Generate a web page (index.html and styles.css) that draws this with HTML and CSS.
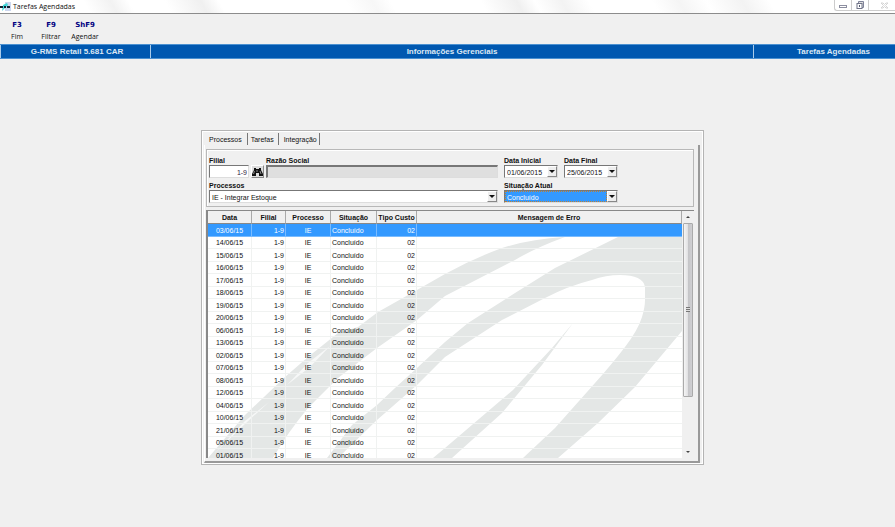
FILE: index.html
```html
<!DOCTYPE html>
<html lang="pt-BR">
<head>
<meta charset="utf-8">
<title>Tarefas Agendadas</title>
<link rel="stylesheet" href="styles.css">
</head>
<body>
<header class="titlebar">
  <svg class="logo" width="11" height="11" viewBox="0 0 11 11">
    <rect x="5" y="1" width="6" height="9" fill="#cbd6ee"/>
    <path d="M3 4l4-2 1 2-3 3-3 3z" fill="#3fd6d8"/>
    <path d="M0 5h3v2H0zM4 5h2v2H4zM7 5h3v2H7z" fill="#123"/>
  </svg>
  <h1>Tarefas Agendadas</h1>
  <div class="window-buttons">
    <button type="button" aria-label="Minimizar"><svg width="9" height="9" viewBox="0 0 9 9"><rect x=".5" y="4.500" width="7" height="2" fill="#fff" stroke="#8c8ea0"/></svg></button>
    <button type="button" aria-label="Restaurar"><svg width="9" height="9" viewBox="0 0 9 9"><path d="M2.500 2.500v-2h5v6h-2" fill="#ddd" stroke="#80849a"/><rect x="1" y="2.500" width="5" height="5" fill="#fff" stroke="#707488"/><rect x="3" y="4" width="1" height="2" fill="#555a70"/></svg></button>
    <button type="button" aria-label="Fechar" class="close"><svg width="9" height="9" viewBox="0 0 9 9"><path d="M1 2h2l1.500 1.500L6 2h2L5.500 4.500 8 7H6L4.500 5.500 3 7H1l2.500-2.500z" fill="#fff" stroke="#d4d4d4"/></svg></button>
  </div>
</header>

<nav class="toolbar">
  <button type="button"><b>F3</b>Fim</button>
  <button type="button"><b>F9</b>Filtrar</button>
  <button type="button"><b>ShF9</b>Agendar</button>
</nav>

<div class="banner">
  <span class="system">G-RMS Retail 5.681 CAR</span>
  <span class="module">Informações Gerenciais</span>
  <span class="screen">Tarefas Agendadas</span>
</div>

<main class="panel">
  <div class="tabs" role="tablist">
    <button type="button" role="tab" aria-selected="true">Processos</button>
    <button type="button" role="tab">Tarefas</button>
    <button type="button" role="tab">Integração</button>
  </div>

  <div class="page">
    <form class="filter">
      <div class="group main">
        <div class="field branch">
          <label for="filial">Filial</label>
          <input id="filial" type="text" value="1-9">
        </div>
        <button type="button" class="search" aria-label="Pesquisar">
          <svg width="11" height="10" viewBox="0 0 11 10"><path d="M2 1h2v1h3V1h2v2l2 4v2H7V6H4v3H0V7l2-4z" fill="#111"/><path d="M2.500 4L1.500 7M8 4l1 3M5 3v2" stroke="#bbb" stroke-width=".7"/></svg>
        </button>
        <div class="field company">
          <label for="razao">Razão Social</label>
          <input id="razao" type="text" readonly>
        </div>
      </div>
      <div class="group dates">
        <div class="field">
          <label for="inicial">Data Inicial</label>
          <div class="combo"><select id="inicial"><option>01/06/2015</option></select><i class="arrow"></i></div>
        </div>
        <div class="field">
          <label for="final">Data Final</label>
          <div class="combo"><select id="final"><option>25/06/2015</option></select><i class="arrow"></i></div>
        </div>
      </div>
      <div class="field">
        <label for="processos">Processos</label>
        <div class="combo"><select id="processos"><option>IE - Integrar Estoque</option></select><i class="arrow"></i></div>
      </div>
      <div class="field">
        <label for="situacao">Situação Atual</label>
        <div class="combo active"><select id="situacao"><option>Concluído</option></select><i class="arrow"></i></div>
      </div>
    </form>

    <div class="grid">
      <div class="view">
        <svg class="watermark" viewBox="208 237 474 221" preserveAspectRatio="none">
          <path d="M565 237Q530 239 502 248Q472 259 445 274L417 290L378 312L358 327L338 333L308 357L285 377L245 415L208 458H273Q288 432 308 408L338 378L377 348L417 320L445 296L515 260Q535 248 565 237z"/>
          <path fill-rule="evenodd" d="M327 458L352 425L377 405L395 388L417 368L445 342L468 323L515 293L555 268L618 237H682V331L635 387L598 423L558 458H523L555 428L595 383Q612 364 625 347Q638 330 642 317Q645 307 645 300V287Q643 275 620 275Q606 275 592 280Q568 286 545 298L502 320L445 357L417 385L377 420L338 458z"/>
          <path d="M573 323L552 348L513 390L445 448L433 458H452L502 413L542 365z"/>
          <path class="slit" d="M330 346L308 363L287 385L310 367zM269 402L245 421L215 453L246 423z"/>
        </svg>
        <table>
          <colgroup>
            <col class="date">
            <col class="branch">
            <col class="process">
            <col class="status">
            <col class="cost">
            <col class="message">
          </colgroup>
          <thead>
            <tr><th>Data</th><th>Filial</th><th>Processo</th><th>Situação</th><th>Tipo Custo</th><th>Mensagem de Erro</th></tr>
          </thead>
          <tbody>
            <tr class="selected"><td>03/06/15</td><td>1-9</td><td>IE</td><td>Concluído</td><td>02</td><td></td></tr>
            <tr><td>14/06/15</td><td>1-9</td><td>IE</td><td>Concluído</td><td>02</td><td></td></tr>
            <tr><td>15/06/15</td><td>1-9</td><td>IE</td><td>Concluído</td><td>02</td><td></td></tr>
            <tr><td>16/06/15</td><td>1-9</td><td>IE</td><td>Concluído</td><td>02</td><td></td></tr>
            <tr><td>17/06/15</td><td>1-9</td><td>IE</td><td>Concluído</td><td>02</td><td></td></tr>
            <tr><td>18/06/15</td><td>1-9</td><td>IE</td><td>Concluído</td><td>02</td><td></td></tr>
            <tr><td>19/06/15</td><td>1-9</td><td>IE</td><td>Concluído</td><td>02</td><td></td></tr>
            <tr><td>20/06/15</td><td>1-9</td><td>IE</td><td>Concluído</td><td>02</td><td></td></tr>
            <tr><td>06/06/15</td><td>1-9</td><td>IE</td><td>Concluído</td><td>02</td><td></td></tr>
            <tr><td>13/06/15</td><td>1-9</td><td>IE</td><td>Concluído</td><td>02</td><td></td></tr>
            <tr><td>02/06/15</td><td>1-9</td><td>IE</td><td>Concluído</td><td>02</td><td></td></tr>
            <tr><td>07/06/15</td><td>1-9</td><td>IE</td><td>Concluído</td><td>02</td><td></td></tr>
            <tr><td>08/06/15</td><td>1-9</td><td>IE</td><td>Concluído</td><td>02</td><td></td></tr>
            <tr><td>12/06/15</td><td>1-9</td><td>IE</td><td>Concluído</td><td>02</td><td></td></tr>
            <tr><td>04/06/15</td><td>1-9</td><td>IE</td><td>Concluído</td><td>02</td><td></td></tr>
            <tr><td>10/06/15</td><td>1-9</td><td>IE</td><td>Concluído</td><td>02</td><td></td></tr>
            <tr><td>21/06/15</td><td>1-9</td><td>IE</td><td>Concluído</td><td>02</td><td></td></tr>
            <tr><td>05/06/15</td><td>1-9</td><td>IE</td><td>Concluído</td><td>02</td><td></td></tr>
            <tr><td>01/06/15</td><td>1-9</td><td>IE</td><td>Concluído</td><td>02</td><td></td></tr>
          </tbody>
        </table>
      </div>
      <div class="scrollbar">
        <i class="up"></i>
        <div class="track"><div class="thumb"><i class="grip"></i></div></div>
        <i class="down"></i>
      </div>
    </div>
  </div>
</main>
</body>
</html>
```

FILE: styles.css
```css
* { box-sizing: border-box; }
body { margin: 0; background: #f0f0f0; color: #111; font: 7px/9px "Liberation Sans", Arial, sans-serif; }
button,
input,
select { margin: 0; padding: 0; border: 0; border-radius: 0; background: none; color: inherit; font: inherit; appearance: none; }

.titlebar { display: flex; height: 14px; border-bottom: 1px solid #8c8c8c; background: linear-gradient(60deg, #fff 10%, #f2f2f2 13%, #fff 15%, #fff 19%, #f0f0f0 23%, #fff 25%, #fff 39%, #f7f7f7 42%, #fff 44%, #fff 54%, #f0f0f0 58%, #fff 60%, #f3f3f3 63%, #fff 66%, #fff 73%, #f5f5f5 76%, #fff 79%, #f3f3f3 83%, #fff 86%); }
.titlebar h1 { flex: 1; margin: 0; padding-left: 2px; font: 7px/13px "Open Sans", sans-serif; }
.logo { margin-top: 1px; }
.window-buttons { display: flex; height: 11px; border: 1px solid #ccc; border-width: 0 0 1px 1px; border-radius: 0 0 0 3px; background: #fff; }
.window-buttons button { display: flex; align-items: center; justify-content: center; width: 17px; border-right: 1px solid #ccc; }
.window-buttons .close { width: 26px; padding-left: 4px; border: 0; }

.toolbar { display: flex; height: 30px; padding: 5px 0 0; }
.toolbar button { display: block; width: 34px; height: 24px; font: 7px/12px "Open Sans", sans-serif; text-align: center; }
.toolbar b { display: block; color: #000080; font-family: "DejaVu Sans", sans-serif; }

.banner { display: flex; height: 15px; border: 1px solid #4b91d1; border-width: 1px 0; background: #0058b0; color: #dce8f4; font-size: 8px; font-weight: bold; line-height: 14px; text-align: center; }
.banner .system { width: 151px; padding-left: 3px; border: 1px solid #a9cbea; border-width: 0 1px; }
.banner .module { flex: 1; }
.banner .screen { width: 142px; padding-left: 18px; border-left: 1px solid #a9cbea; }

.panel { margin: 71px 191px 0 201px; padding: 2px 3px 1px 2px; border: 1px solid #b4b4b4; box-shadow: inset 1px 1px #fff, inset -1px -1px #fff; }
.tabs { display: flex; height: 12px; }
.tabs button { padding: 1px 5px 0; border-right: 1px solid #777; line-height: 12px; }
.tabs button + button { padding: 1px 4px 0 3px; }
.tabs button + button + button { padding: 1px 2px 0 5px; }
.page { padding: 4px 4px 3px 1px; border: 1px solid #999; border-width: 0 2px 2px 1px; border-left-color: #fff; }

.filter { display: grid; grid-template-columns: 1fr 114px; gap: 3px 6px; height: 58px; padding: 6px 75px 3px 2px; border: 1px solid #b8b8b8; box-shadow: inset 1px 1px #fff; }
.group { display: flex; align-items: flex-end; }
.field { min-width: 0; }
.field label { display: block; font-weight: bold; line-height: 9px; white-space: nowrap; }
.field input,
.combo { display: block; width: 100%; height: 13px; border: 1px solid; border-color: #777 #ddd #ddd #777; background: #fff; }
.main .branch { width: 40px; margin-right: 2px; }
.main .branch input { padding: 1px 1px 0 0; color: #302040; text-align: right; }
.main .company { flex: 1; margin-left: 2px; }
.main .company input { border-width: 2px 1px 1px 2px; background: #dfdfdf; }
.search { width: 13px; height: 13px; border: 1px solid; border-color: #fff #888 #888 #fff; background: #ddd; }
.search svg { display: block; }
.dates { gap: 6px; }
.dates .field { flex: 1; }
.combo { display: flex; }
.combo select { flex: 1; min-width: 0; padding: 1px 0 0 2px; }
.combo.active select { outline: 1px dotted #c08030; outline-offset: -1px; background: #3399ff; color: #fff; }
.arrow { display: flex; align-items: center; justify-content: center; width: 10px; border: 1px solid; border-color: #fff #888 #888 #fff; background: #eee; }
.arrow::before { border: 3px solid transparent; border-top-color: #111; border-bottom: 0; content: ""; }

.grid { display: flex; height: 248px; margin-top: 3px; border: 1px solid #888; border-width: 1px 0 0 2px; background: #fff; overflow: hidden; }
.view { position: relative; flex: 1; min-width: 0; }
.watermark { position: absolute; top: 26px; left: 0; width: 100%; height: 221px; fill: #e4e7e6; }
.watermark .slit { fill: #f7f8f8; }
table { position: relative; width: 100%; border-collapse: separate; border-spacing: 0; table-layout: fixed; }
col.date { width: 44px; }
col.branch { width: 34px; }
col.process { width: 45px; }
col.status { width: 46px; }
col.cost { width: 40px; }
th,
td { padding: 0 1px; overflow: hidden; white-space: nowrap; }
th { height: 13px; padding-top: 1px; border-right: 1px solid #aaa; border-bottom: 1px solid #888; background: #f0f0f0; line-height: 11px; }
td { height: 12px; border-right: 1px solid #f0f2f1; border-bottom: 1px solid #f0f2f1; line-height: 11px; }
tr:nth-child(odd) td { height: 13px; line-height: 12px; }
tbody td { padding-top: 1px; line-height: 10px; }
tbody tr:nth-child(odd) td { line-height: 11px; }
td:nth-child(1),
td:nth-child(3) { text-align: center; }
td:nth-child(2),
td:nth-child(5) { text-align: right; }
td:last-child { border-right: 0; }
.selected td { border-color: #79bbff; background: #3399ff; color: #fff; }

.scrollbar { display: flex; flex-direction: column; width: 12px; background: #f0f0f0; }
.scrollbar .up,
.scrollbar .down { display: flex; align-items: center; justify-content: center; height: 12px; }
.scrollbar .up::before,
.scrollbar .down::before { border: 2px solid transparent; content: ""; }
.scrollbar .up::before { border-top: 0; border-bottom-color: #444; }
.scrollbar .down::before { border-top-color: #444; border-bottom: 0; }
.track { flex: 1; padding: 0 1px; }
.thumb { display: flex; align-items: center; justify-content: center; height: 78%; border: 1px solid #aaa; border-radius: 1px; background: linear-gradient(90deg, #f5f5f5, #e2e2e4 45%, #c5c5c8 55%, #cfcfd2); }
.grip { width: 4px; height: 5px; background: repeating-linear-gradient(#777 0 1px, #ddd 1px 2px); }
```
